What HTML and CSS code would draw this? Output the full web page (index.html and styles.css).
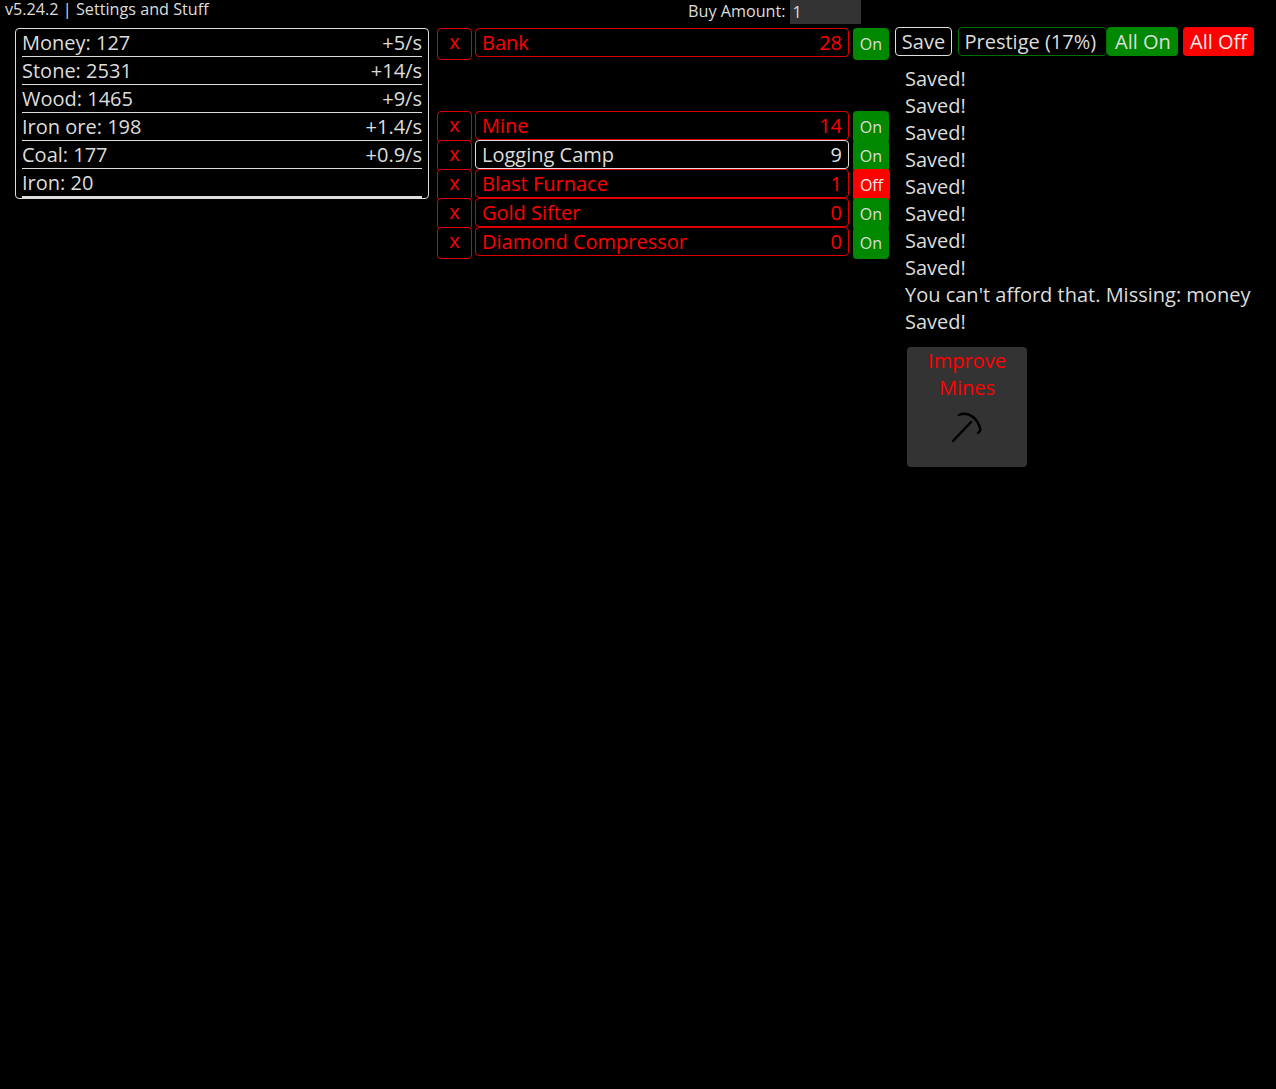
FILE: index.html
```html
<!DOCTYPE html>
<html lang="en">
<head>
<meta charset="utf-8">
<title>Settings and Stuff</title>
<link rel="stylesheet" href="styles.css">
</head>
<body>
<header class="topbar">
  <div class="version">v5.24.2 | Settings and Stuff</div>
  <label class="buy">Buy Amount: <input class="buy-input" type="text" value="1"></label>
</header>
<main class="columns">
  <section class="resources">
    <div class="res"><span>Money: 127</span><span>+5/s</span></div>
    <div class="res"><span>Stone: 2531</span><span>+14/s</span></div>
    <div class="res"><span>Wood: 1465</span><span>+9/s</span></div>
    <div class="res"><span>Iron ore: 198</span><span>+1.4/s</span></div>
    <div class="res"><span>Coal: 177</span><span>+0.9/s</span></div>
    <div class="res"><span>Iron: 20</span><span></span></div>
  </section>
  <section class="buildings">
    <div class="row"><button class="x">x</button><div class="bld"><span>Bank</span><span>28</span></div><button class="tog on">On</button></div>
    <div class="row spacer"></div>
    <div class="row"><button class="x">x</button><div class="bld"><span>Mine</span><span>14</span></div><button class="tog on">On</button></div>
    <div class="row"><button class="x">x</button><div class="bld ok"><span>Logging Camp</span><span>9</span></div><button class="tog on">On</button></div>
    <div class="row"><button class="x">x</button><div class="bld"><span>Blast Furnace</span><span>1</span></div><button class="tog off">Off</button></div>
    <div class="row"><button class="x">x</button><div class="bld"><span>Gold Sifter</span><span>0</span></div><button class="tog on">On</button></div>
    <div class="row"><button class="x">x</button><div class="bld"><span>Diamond Compressor</span><span>0</span></div><button class="tog on">On</button></div>
  </section>
  <section class="side">
    <div class="actions">
      <button class="act save">Save</button>
      <button class="act prestige">Prestige (17%)</button>
      <button class="act allon">All On</button>
      <button class="act alloff">All Off</button>
    </div>
    <div class="log">
      <div>Saved!</div><div>Saved!</div><div>Saved!</div><div>Saved!</div><div>Saved!</div>
      <div>Saved!</div><div>Saved!</div><div>Saved!</div>
      <div>You can't afford that. Missing: money</div>
      <div>Saved!</div>
    </div>
    <div class="upgrade">
      <div class="up-title">Improve Mines</div>
      <svg class="up-icon" viewBox="0 0 34 34" width="34" height="34"><path d="M3 30 L21 11 M9 4 C17 0 27 6 30 17 C30.5 19 30 21 28 22" fill="none" stroke="#000" stroke-width="2.5" stroke-linecap="round"/></svg>
    </div>
  </section>
</main>
</body>
</html>
```
FILE: styles.css
```css
* { box-sizing: border-box; }
html, body { margin: 0; background: #000; }
body { height: 1089px; overflow: hidden; color: #ddd; font-family: "Open Sans", sans-serif; font-size: 20px; line-height: 27px; }
button { font-family: inherit; cursor: pointer; padding: 0; }

.topbar { display: flex; height: 28px; font-size: 16.2px; line-height: 18px; padding-left: 5px; }
.version { width: 683px; }
.buy { display: flex; align-items: flex-start; justify-content: space-between; width: 173px; line-height: 22px; }
.buy-input { width: 71px; height: 24px; background: #333; color: #ddd; border: 0; padding: 0 3px 1px 2.5px; font: inherit; outline: 0; }

.columns { display: flex; align-items: flex-start; padding-left: 15px; }

.resources { width: 414px; height: 171px; border: 1px solid #ddd; border-radius: 4px; padding: 0 6px; flex: none; }
.res { display: flex; justify-content: space-between; height: 28px; line-height: 27px; border-bottom: 1px solid #ddd; }
.res:last-child { border-bottom-width: 2px; height: 29px; }

.buildings { width: 453px; margin-left: 8px; flex: none; }
.row { display: flex; height: 29px; align-items: flex-start; }
.spacer { height: 54px; }
.x { width: 35px; height: 32px; flex: none; background: #000; color: #f00; border: 1px solid #d00; border-radius: 4px; font-size: 20px; line-height: 26px; padding-bottom: 4px; }
.bld { width: 374px; height: 29px; margin-left: 3px; flex: none; display: flex; justify-content: space-between; color: #f00; border: 1px solid #d00; border-radius: 4px; padding: 0 6px; line-height: 27px; background: #000; }
.bld.ok { color: #ddd; border-color: #ddd; }
.tog { height: 32px; margin-left: 4px; border: 0; border-radius: 4px; color: #ddd; font-size: 16px; line-height: 32px; flex: none; position: relative; }
.tog.on { width: 36px; background: #080; }
.tog.off { width: 37px; background: #f00; color: #eee; }

.side { flex: none; margin-left: 5px; margin-top: -1px; }
.actions { display: flex; align-items: flex-start; }
.act { height: 29px; border-radius: 4px; font-size: 20px; line-height: 27px; color: #ddd; background: #000; border: 1px solid #ddd; }
.save { width: 57px; }
.prestige { width: 149px; margin-left: 6px; padding-left: 5.5px; text-align: left; border-color: #007000; }
.allon { width: 71px; padding-left: 1px; background: #080; border: 0; }
.alloff { width: 71px; margin-left: 5px; background: #f00; border: 0; color: #eee; }

.log { margin: 9px 0 0 10px; white-space: nowrap; }
.upgrade { width: 120px; height: 120px; margin: 12px 0 0 12px; background: #333; border-radius: 4px; display: flex; flex-direction: column; align-items: center; text-align: center; color: #f00; }
.up-title { width: 100px; }
.up-icon { margin-top: 10px; }
```
